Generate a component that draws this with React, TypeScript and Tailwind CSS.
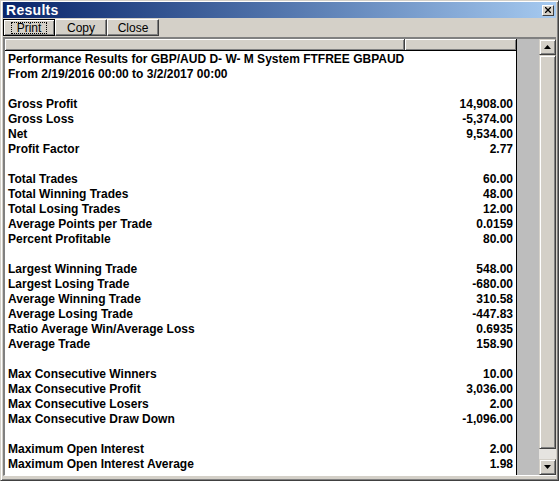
import React from 'react'

const rows: [string, string][] = [
  ['Performance Results for GBP/AUD D- W- M System FTFREE GBPAUD', ''],
  ['From 2/19/2016 00:00 to 3/2/2017 00:00', ''],
  ['', ''],
  ['Gross Profit', '14,908.00'],
  ['Gross Loss', '-5,374.00'],
  ['Net', '9,534.00'],
  ['Profit Factor', '2.77'],
  ['', ''],
  ['Total Trades', '60.00'],
  ['Total Winning Trades', '48.00'],
  ['Total Losing Trades', '12.00'],
  ['Average Points per Trade', '0.0159'],
  ['Percent Profitable', '80.00'],
  ['', ''],
  ['Largest Winning Trade', '548.00'],
  ['Largest Losing Trade', '-680.00'],
  ['Average Winning Trade', '310.58'],
  ['Average Losing Trade', '-447.83'],
  ['Ratio Average Win/Average Loss', '0.6935'],
  ['Average Trade', '158.90'],
  ['', ''],
  ['Max Consecutive Winners', '10.00'],
  ['Max Consecutive Profit', '3,036.00'],
  ['Max Consecutive Losers', '2.00'],
  ['Max Consecutive Draw Down', '-1,096.00'],
  ['', ''],
  ['Maximum Open Interest', '2.00'],
  ['Maximum Open Interest Average', '1.98'],
]

function ToolButton({ label, focused }: { label: string; focused?: boolean }) {
  return (
    <button
      className={
        'w-[52px] h-[17px] bg-[#d4d0c8] flex items-center justify-center text-[12px] leading-none text-black ' +
        (focused
          ? 'border border-black shadow-[inset_1px_1px_0_#fff,inset_-1px_-1px_0_#808080]'
          : 'border border-t-white border-l-white border-r-[#404040] border-b-[#404040] shadow-[inset_-1px_-1px_0_#808080]')
      }
    >
      <span className={focused ? 'px-[6px] outline outline-1 outline-dotted outline-black -outline-offset-1' : ''}>
        {label}
      </span>
    </button>
  )
}

function Arrow({ up }: { up?: boolean }) {
  return (
    <div className="w-[17px] h-[16px] bg-[#d4d0c8] border border-t-[#d4d0c8] border-l-[#d4d0c8] border-r-[#404040] border-b-[#404040] shadow-[inset_1px_1px_0_#fff,inset_-1px_-1px_0_#808080] flex items-center justify-center">
      <svg width="7" height="4" viewBox="0 0 7 4">
        {up ? <polygon points="3.5,0 7,4 0,4" fill="#000" /> : <polygon points="0,0 7,0 3.5,4" fill="#000" />}
      </svg>
    </div>
  )
}

export default function App() {
  return (
    <div
      className="w-[559px] h-[481px] bg-[#d4d0c8] flex flex-col overflow-hidden border border-t-[#d4d0c8] border-l-[#d4d0c8] border-r-[#404040] border-b-[#404040] shadow-[inset_1px_1px_0_#fff,inset_-1px_-1px_0_#808080]"
      style={{ fontFamily: '"Liberation Sans", Arial, sans-serif' }}
    >
      {/* title bar */}
      <div className="mx-[2px] mt-[1px] h-[16px] bg-gradient-to-r from-[#0a246a] to-[#a6caf0] flex items-center justify-between pl-[3px] pr-[2px]">
        <span className="text-white font-bold text-[14px] tracking-[0.3px] leading-none">Results</span>
        <div className="w-[12px] h-[11px] bg-[#d4d0c8] border border-t-white border-l-white border-r-[#404040] border-b-[#404040] flex items-center justify-center">
          <svg width="6" height="6" viewBox="0 0 6 6">
            <path d="M0 0L6 6M6 0L0 6" stroke="#000" strokeWidth="1.3" />
          </svg>
        </div>
      </div>

      {/* toolbar */}
      <div className="flex pl-[2px] pt-[1px] h-[19px]">
        <ToolButton label="Print" focused />
        <ToolButton label="Copy" />
        <ToolButton label="Close" />
      </div>

      {/* main area */}
      <div className="flex flex-1 pl-[2px] pr-[2px] pb-[4px]">
        <div className="flex flex-1 border-l-2 border-t-2 border-l-[#808080] border-t-[#808080] border-b border-b-white">
          {/* list */}
          <div className="w-[512px] flex flex-col bg-white border-r border-black">
            <div className="flex h-[12px] bg-[#d4d0c8] border-b border-black">
              <div className="w-[400px] border-r border-[#404040] shadow-[inset_1px_1px_0_#fff,inset_-1px_-1px_0_#808080]" />
              <div className="flex-1 shadow-[inset_1px_1px_0_#fff,inset_-1px_-1px_0_#808080]" />
            </div>
            <div className="flex flex-col">
              {rows.map(([label, value], i) => (
                <div key={i} className="flex h-[15px] items-center text-[12px] font-bold text-black leading-none">
                  <div className="w-[400px] pl-[3px] whitespace-nowrap">{label}</div>
                  <div className="flex-1 text-right pr-[3px]">{value}</div>
                </div>
              ))}
            </div>
          </div>
          {/* empty gray column */}
          <div className="flex-1 bg-[#bdbdbd]" />
          {/* scrollbar */}
          <div className="w-[17px] flex flex-col bg-[#e6e4e0]">
            <Arrow up />
            <div className="h-[394px] bg-[#d4d0c8] border border-t-[#d4d0c8] border-l-[#d4d0c8] border-r-[#404040] border-b-[#404040] shadow-[inset_1px_1px_0_#fff,inset_-1px_-1px_0_#808080]" />
            <div className="flex-1" />
            <Arrow />
          </div>
        </div>
      </div>
    </div>
  )
}
